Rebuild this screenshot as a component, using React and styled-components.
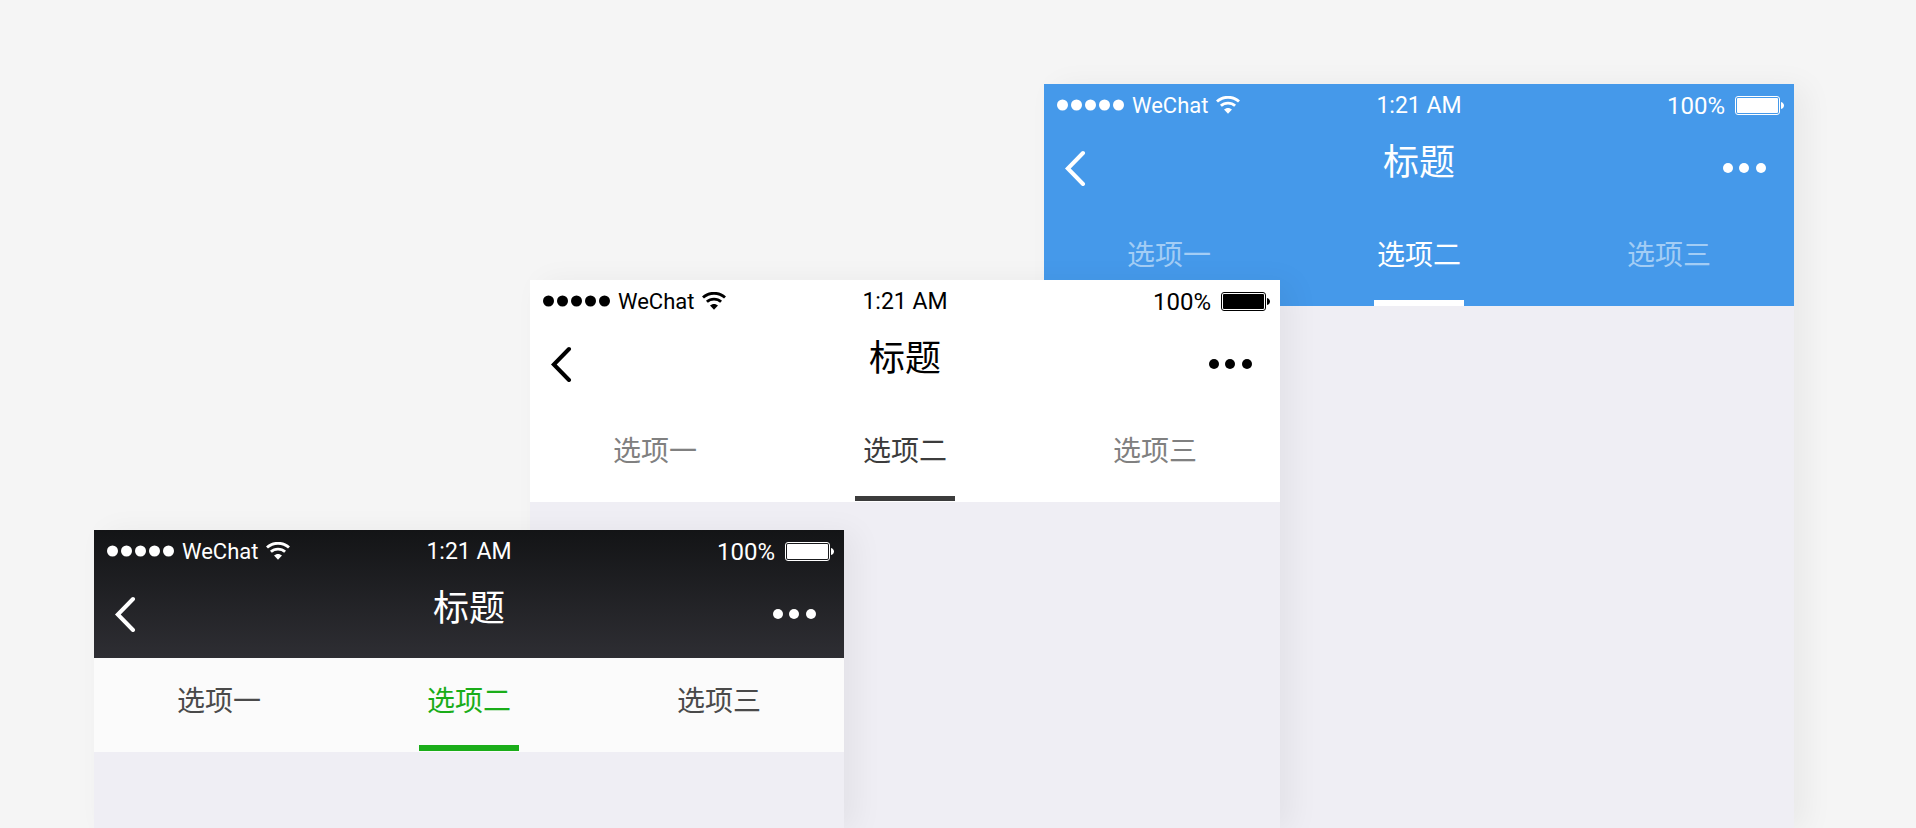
import React from "react";
import styled, { createGlobalStyle } from "styled-components";

const GlobalStyle = createGlobalStyle`
  *, *::before, *::after { box-sizing: border-box; }
  body {
    margin: 0;
    background: #f5f5f5;
    font-family: Roboto, "Noto Sans CJK SC", sans-serif;
  }
`;

const themes = {
  blue: {
    header: "#4599ea",
    tabs: "#4599ea",
    text: "#fff",
    tab: "#a3cdf5",
    active: "#fff",
    barWidth: 90,
    barHeight: 6,
    barGap: 0,
    area: "1 / 5 / -1 / 7",
  },
  white: {
    header: "#fff",
    tabs: "#fff",
    text: "#000",
    tab: "#808080",
    active: "#3c3c3c",
    barWidth: 100,
    barHeight: 5,
    barGap: 1,
    area: "2 / 3 / -1 / 6",
  },
  dark: {
    header: "linear-gradient(#131416, #2e2e33)",
    tabs: "#fbfbfb",
    text: "#fff",
    tab: "#4a4a4a",
    active: "#1aad19",
    barWidth: 100,
    barHeight: 6,
    barGap: 1,
    area: "3 / 2 / -1 / 4",
  },
};

/* The three screens share one grid, so each overlaps the one behind it. */
const Stage = styled.main`
  display: grid;
  grid-template-columns:
    minmax(0, 94fr) minmax(0, 436fr) minmax(0, 314fr) minmax(0, 200fr)
    minmax(0, 236fr) minmax(0, 514fr) minmax(0, 122fr);
  grid-template-rows: 196px 250px minmax(298px, 1fr);
  min-height: 100vh;
  padding-top: 84px;
  overflow: hidden;
`;

const Screen = styled.section`
  grid-area: ${({ $t }) => $t.area};
  color: ${({ $t }) => $t.text};
  background: #efeef4;
  box-shadow: 12px 2px 28px rgba(0, 0, 0, 0.05);
`;

const Header = styled.header`
  height: 128px;
  background: ${({ $t }) => $t.header};
`;

const StatusBar = styled.div`
  display: grid;
  grid-template-columns: 1fr auto 1fr;
  align-items: center;
  height: 40px;
  padding: 2px 10px 0;
`;

const StatusGroup = styled.div`
  display: flex;
  align-items: center;
  justify-content: ${({ $end }) => ($end ? "flex-end" : "flex-start")};
  gap: ${({ $end }) => ($end ? 10 : 8)}px;
  padding-left: 3px;
`;

const StatusText = styled.span`
  padding-top: 2px;
  font-size: ${({ $size }) => $size}px;
  line-height: 28px;
`;

const NavBar = styled.div`
  display: grid;
  grid-template-columns: 1fr auto 1fr;
  height: 88px;
  padding: 0 20px;
`;

const Title = styled.h1`
  margin: 0;
  padding-top: 9px;
  font-size: 36px;
  font-weight: 400;
  line-height: 52px;
  font-family: "Noto Sans CJK SC", sans-serif;
`;

const IconButton = styled.button`
  display: flex;
  align-items: center;
  justify-self: ${({ $end }) => ($end ? "end" : "start")};
  height: 88px;
  padding: 0 ${({ $end }) => ($end ? 8 : 0)}px 0 0;
  border: 0;
  color: inherit;
  background: none;
  cursor: pointer;
`;

const Tabs = styled.nav`
  display: grid;
  grid-template-columns: repeat(3, 1fr);
  height: 94px;
  background: ${({ $t }) => $t.tabs};
`;

const Tab = styled.button`
  display: flex;
  flex-direction: column;
  align-items: center;
  justify-content: space-between;
  padding: 20px 0 ${({ $t }) => $t.barGap}px;
  border: 0;
  color: ${({ $t, $active }) => ($active ? $t.active : $t.tab)};
  background: none;
  font-family: "Noto Sans CJK SC", sans-serif;
  font-size: 28px;
  line-height: 42px;
  cursor: pointer;

  &::after {
    content: "";
    width: ${({ $t }) => $t.barWidth}px;
    height: ${({ $t }) => $t.barHeight}px;
    background: ${({ $active }) => ($active ? "currentColor" : "transparent")};
  }
`;

const Signal = () => (
  <svg width="67" height="12" viewBox="0 0 67 12" fill="currentColor" aria-hidden="true">
    {[0, 1, 2, 3, 4].map((i) => (
      <circle key={i} cx={5.5 + i * 14} cy="6" r="5.5" />
    ))}
  </svg>
);

const Wifi = () => (
  <svg width="24" height="18" viewBox="0 0 24 18" fill="none" stroke="currentColor" aria-hidden="true">
    <path d="M1 5.6C7 -.2 17 -.2 23 5.6" strokeWidth="2.8" />
    <path d="M4.9 9.8C8.9 6.1 15.1 6.1 19.1 9.8" strokeWidth="2.8" />
    <path d="M8 13.6C10.3 11.4 13.7 11.4 16 13.6L12 17.8Z" fill="currentColor" stroke="none" />
  </svg>
);

const Battery = () => (
  <svg width="49" height="19" viewBox="0 0 49 19" fill="none" aria-hidden="true">
    <rect x=".5" y=".5" width="44" height="18" rx="2.5" stroke="currentColor" />
    <rect x="2" y="2" width="41" height="15" rx="1" fill="currentColor" />
    <path d="M46 6C50 7 50 12 46 13Z" fill="currentColor" />
  </svg>
);

const BackIcon = () => (
  <svg
    width="22"
    height="36"
    viewBox="0 0 22 36"
    fill="none"
    stroke="currentColor"
    strokeWidth="4"
    strokeLinecap="round"
    aria-hidden="true"
  >
    <path d="M19 3L3.8 18.5L19 34" />
  </svg>
);

const MoreIcon = () => (
  <svg width="43" height="10" viewBox="0 0 43 10" fill="currentColor" aria-hidden="true">
    <circle cx="5" cy="5" r="5" />
    <circle cx="21" cy="5" r="5" />
    <circle cx="38" cy="5" r="5" />
  </svg>
);

const tabLabels = ["选项一", "选项二", "选项三"];

function PhoneScreen({ theme: t }) {
  return (
    <Screen $t={t}>
      <Header $t={t}>
        <StatusBar>
          <StatusGroup>
            <Signal />
            <StatusText $size={22}>WeChat</StatusText>
            <Wifi />
          </StatusGroup>
          <StatusText $size={23}>1:21 AM</StatusText>
          <StatusGroup $end>
            <StatusText $size={24}>100%</StatusText>
            <Battery />
          </StatusGroup>
        </StatusBar>
        <NavBar>
          <IconButton type="button" aria-label="返回">
            <BackIcon />
          </IconButton>
          <Title>标题</Title>
          <IconButton type="button" aria-label="更多" $end>
            <MoreIcon />
          </IconButton>
        </NavBar>
      </Header>
      <Tabs $t={t}>
        {tabLabels.map((label, i) => (
          <Tab key={label} type="button" $t={t} $active={i === 1}>
            {label}
          </Tab>
        ))}
      </Tabs>
    </Screen>
  );
}

export default function App() {
  return (
    <>
      <GlobalStyle />
      <Stage>
        <PhoneScreen theme={themes.blue} />
        <PhoneScreen theme={themes.white} />
        <PhoneScreen theme={themes.dark} />
      </Stage>
    </>
  );
}
